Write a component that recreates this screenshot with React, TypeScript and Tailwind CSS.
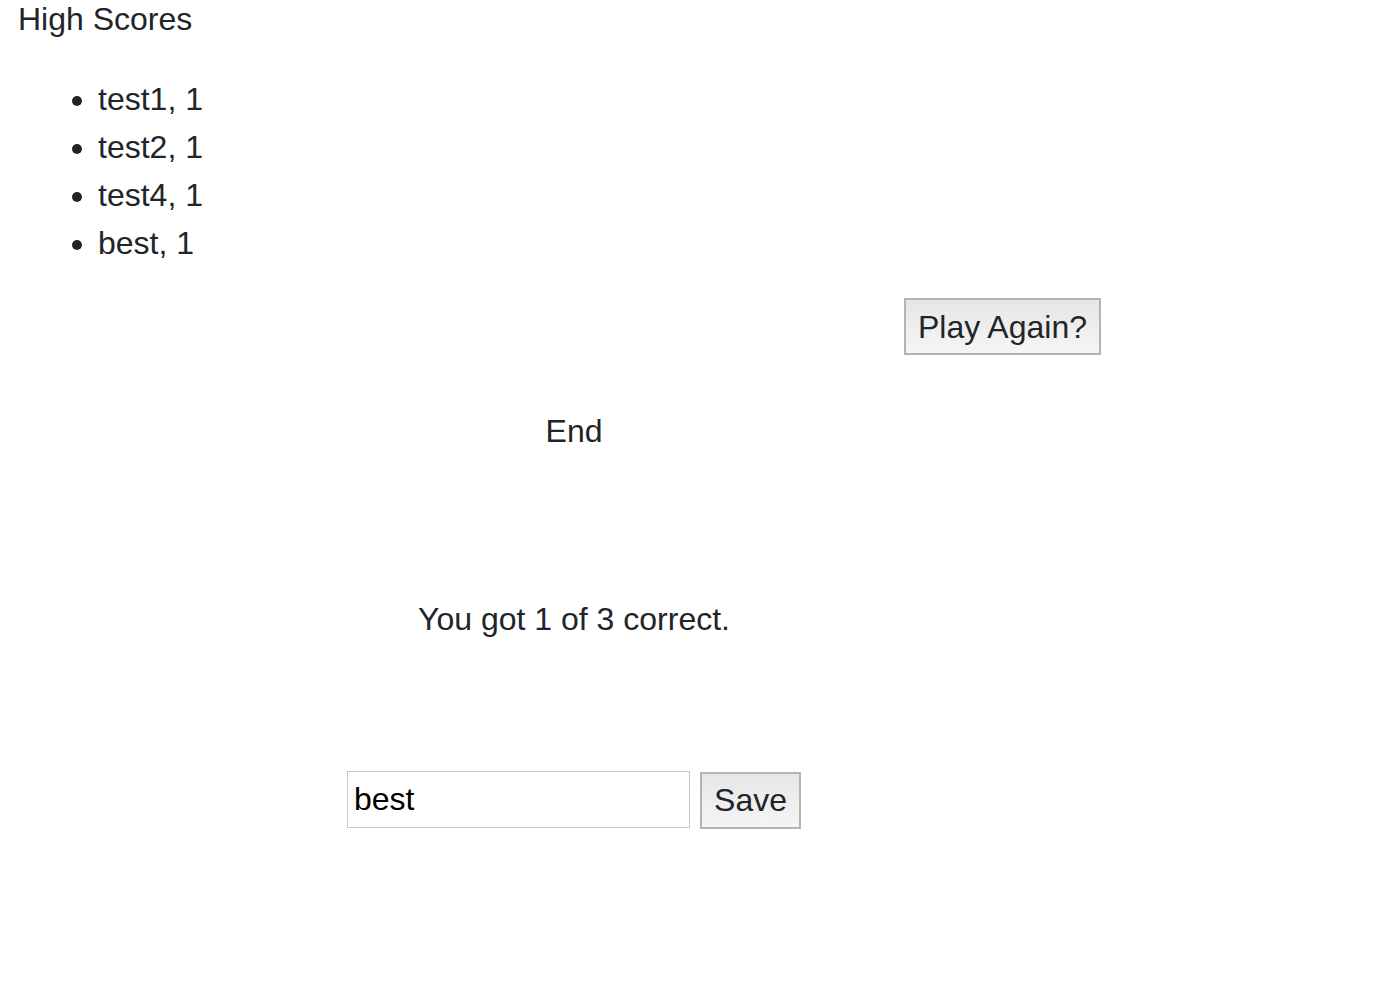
import { useState } from "react";

const SCORES = [
  { name: "test1", score: 1 },
  { name: "test2", score: 1 },
  { name: "test4", score: 1 },
  { name: "best", score: 1 },
];

export default function App() {
  const [name, setName] = useState("best");

  return (
    <main className="min-h-[986px] bg-white text-[#212529] text-[32px] leading-[1.2] font-['Liberation_Sans',Arial,sans-serif]">
      {/* high scores */}
      <section className="pl-[18px]">
        <p>High Scores</p>
        <ul className="mt-[37px] list-disc pl-[80px] leading-[48px]">
          {SCORES.map((s) => (
            <li key={s.name}>
              {s.name}, {s.score}
            </li>
          ))}
        </ul>
      </section>

      <div className="mt-[31px] pl-[904px]">
        <button className="w-[197px] h-[57px] border-2 border-[#b4b4b4] bg-gradient-to-b from-[#e6e6e6] to-[#f5f5f5] text-[#212529]">
          Play Again?
        </button>
      </div>

      {/* result */}
      <section className="w-[1148px] flex flex-col items-center">
        <p className="mt-[57px]">End</p>
        <p className="mt-[149px]">You got 1 of 3 correct.</p>
        <div className="mt-[133px] flex items-start gap-[10px]">
          <input
            value={name}
            onChange={(e) => setName(e.target.value)}
            className="w-[343px] h-[57px] border border-[#c8c8c8] px-[6px] text-black outline-none"
          />
          <button className="mt-px w-[101px] h-[57px] border-2 border-[#b4b4b4] bg-gradient-to-b from-[#e6e6e6] to-[#f5f5f5] text-[#212529]">
            Save
          </button>
        </div>
      </section>
    </main>
  );
}
